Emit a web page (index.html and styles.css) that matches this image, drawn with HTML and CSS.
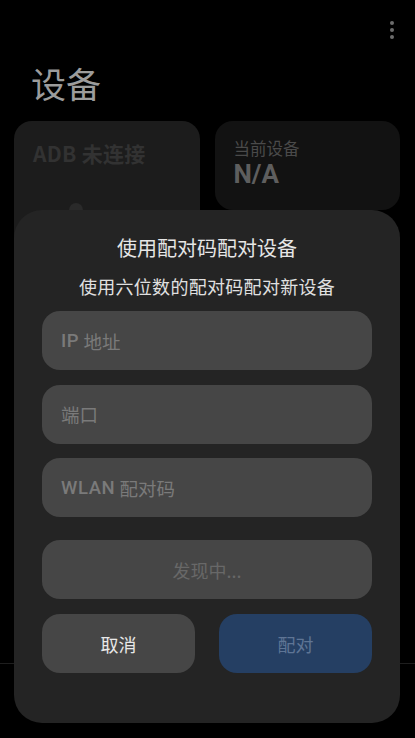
FILE: index.html
```html
<!DOCTYPE html>
<html lang="zh-CN">
<head>
<meta charset="utf-8">
<link rel="stylesheet" href="styles.css">
</head>
<body>
<div class="page">
  <div class="topbar">
    <div class="more"><span></span><span></span><span></span></div>
  </div>
  <h1 class="title">设备</h1>
  <div class="cards">
    <div class="card card-adb">
      <div class="adb-text">ADB 未连接</div>
      <div class="adb-bump"></div>
    </div>
    <div class="card card-dev">
      <div class="dev-label">当前设备</div>
      <div class="dev-value">N/A</div>
    </div>
  </div>
  <div class="bottomnav"></div>
</div>
<div class="dialog">
  <div class="d-title">使用配对码配对设备</div>
  <div class="d-sub">使用六位数的配对码配对新设备</div>
  <div class="fields">
    <div class="field"><span class="lat">IP</span> 地址</div>
    <div class="field">端口</div>
    <div class="field"><span class="lat">WLAN</span> 配对码</div>
  </div>
  <div class="discover">发现中...</div>
  <div class="actions">
    <div class="btn btn-cancel">取消</div>
    <div class="btn btn-pair">配对</div>
  </div>
</div>
</body>
</html>
```
FILE: styles.css
```css
html, body {
  margin: 0;
  padding: 0;
  background: #000;
  width: 415px;
  height: 738px;
  overflow: hidden;
  font-family: "Noto Sans CJK SC", "Noto Sans", sans-serif;
}
.page {
  position: relative;
  height: 738px;
}
.topbar {
  height: 58px;
  display: flex;
  justify-content: flex-end;
  align-items: flex-start;
  padding-top: 21px;
  padding-right: 21px;
  box-sizing: border-box;
}
.more {
  display: flex;
  flex-direction: column;
  gap: 3px;
}
.more span {
  width: 4px;
  height: 4px;
  border-radius: 50%;
  background: #6c6c6c;
}
.title {
  margin: 0;
  padding-left: 31px;
  font-size: 35px;
  font-weight: 400;
  line-height: 50px;
  color: #9c9c9c;
  height: 63px;
}
.cards {
  display: flex;
  gap: 15px;
  padding: 0 15px 0 14px;
}
.card {
  flex: 1;
  border-radius: 18px;
  box-sizing: border-box;
  padding: 18px 19px;
}
.card-adb {
  background: #1c1c1c;
  height: 200px;
  position: relative;
}
.adb-text {
  font-size: 21px;
  font-weight: 700;
  color: #323232;
  line-height: 28px;
  letter-spacing: 0.3px;
}
.adb-bump {
  position: absolute;
  left: 55px;
  top: 82px;
  width: 14px;
  height: 14px;
  border-radius: 50%;
  background: #2a2a2a;
}
.card-dev {
  background: #121212;
  height: 89px;
  padding-top: 15px;
}
.dev-label {
  font-size: 16.5px;
  color: #4a4a4a;
  line-height: 24px;
}
.dev-value {
  font-size: 26px;
  font-weight: 700;
  color: #5e5e5e;
  line-height: 28px;
  font-family: "Roboto", "Noto Sans CJK SC", sans-serif;
}
.bottomnav {
  position: absolute;
  left: 0;
  right: 0;
  top: 663px;
  bottom: 0;
  border-top: 1px solid #1e1e1e;
}
.dialog {
  position: absolute;
  left: 14px;
  top: 210px;
  width: 386px;
  height: 513px;
  background: #242424;
  border-radius: 28px;
  box-sizing: border-box;
  padding: 24px 28px 0 28px;
  display: flex;
  flex-direction: column;
}
.d-title {
  text-align: center;
  font-size: 20px;
  line-height: 28px;
  color: #e6e6e6;
}
.d-sub {
  text-align: center;
  font-size: 18px;
  line-height: 26px;
  color: #e0e0e0;
  margin-top: 11px;
  letter-spacing: 0.3px;
}
.fields {
  display: flex;
  flex-direction: column;
  gap: 14.5px;
  margin-top: 12px;
}
.field, .discover, .btn {
  height: 59px;
  border-radius: 18px;
  background: #464646;
  display: flex;
  align-items: center;
  font-size: 18px;
}
.field {
  padding-left: 19px;
  color: #7a7a7a;
  white-space: pre;
  font-size: 18.5px;
}
.lat {
  font-weight: 500;
  letter-spacing: 0.6px;
  font-family: "Roboto", "Noto Sans CJK SC", sans-serif;
}
.discover {
  margin-top: 23px;
  justify-content: center;
  color: #686868;
}
.actions {
  display: flex;
  gap: 24px;
  margin-top: 15px;
}
.btn {
  flex: 1;
  justify-content: center;
}
.btn-cancel {
  color: #e8e8e8;
}
.btn-pair {
  background: #253f63;
  color: #5f7595;
}
```
